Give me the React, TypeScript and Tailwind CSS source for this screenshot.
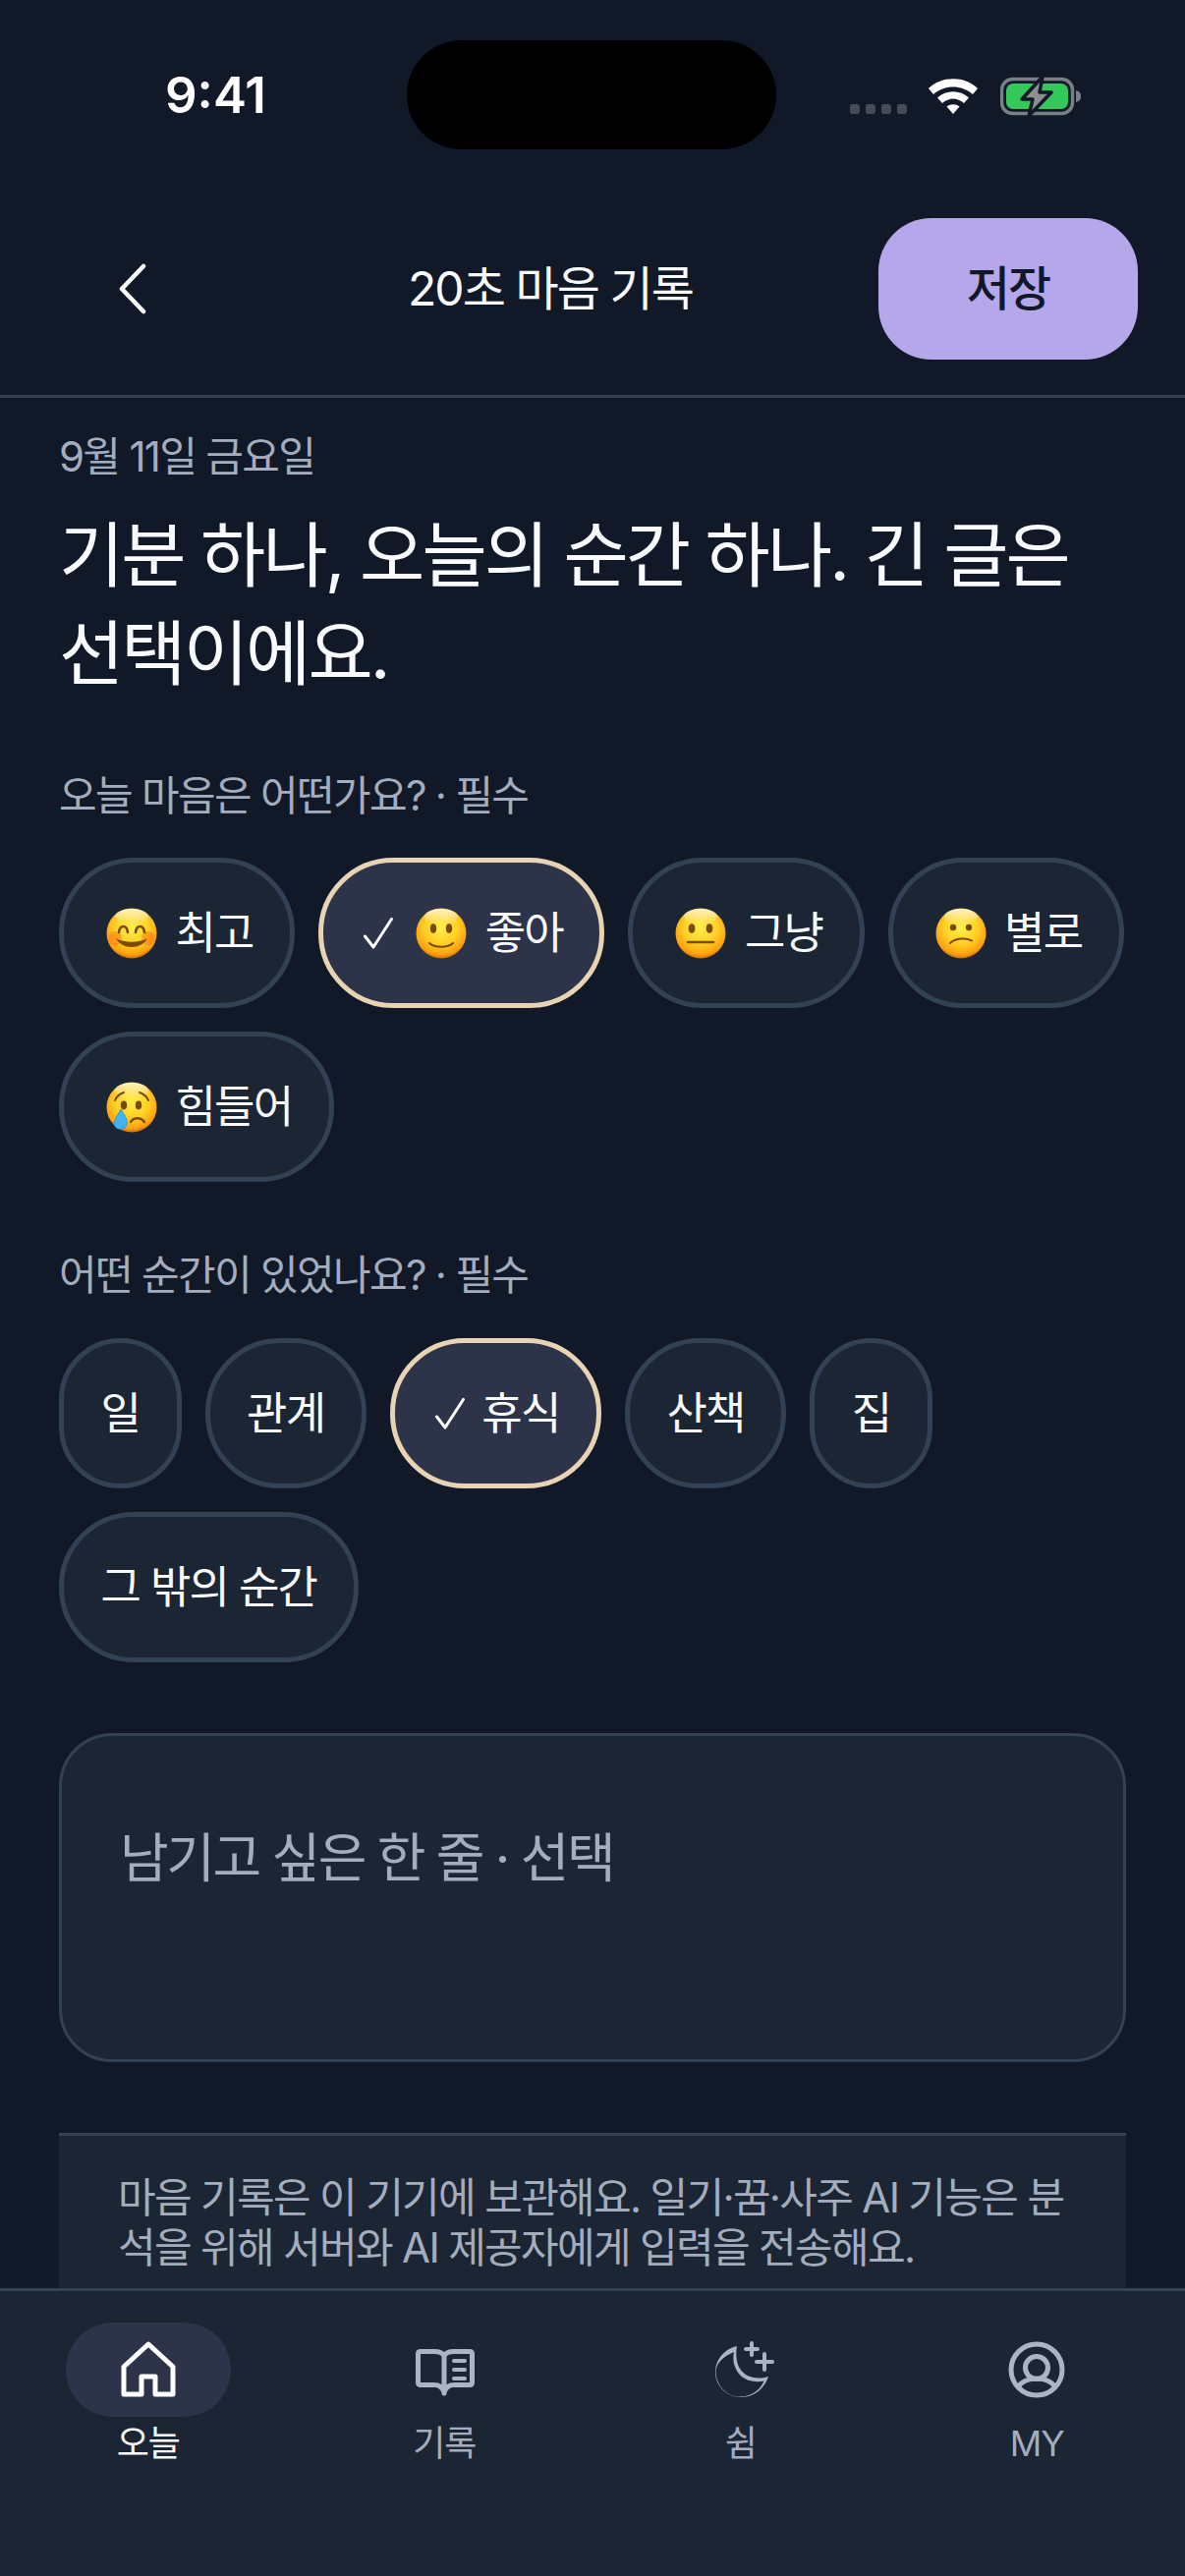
import type { ReactNode } from "react";

type Mood = "best" | "good" | "soso" | "bad" | "hard";

const moods: { id: Mood; label: string; selected?: boolean }[] = [
  { id: "best", label: "최고" },
  { id: "good", label: "좋아", selected: true },
  { id: "soso", label: "그냥" },
  { id: "bad", label: "별로" },
  { id: "hard", label: "힘들어" },
];

const moments: { label: string; selected?: boolean }[] = [
  { label: "일" },
  { label: "관계" },
  { label: "휴식", selected: true },
  { label: "산책" },
  { label: "집" },
  { label: "그 밖의 순간" },
];

function CheckMark() {
  return (
    <svg width="30" height="32" viewBox="0 0 30 32" fill="none" className="ml-[3.5px] mr-[17.5px] shrink-0">
      <path d="M1.5 19 L10 30 L28.5 1.5" stroke="#ffffff" strokeWidth="3" strokeLinecap="round" strokeLinejoin="round" />
    </svg>
  );
}

function EmojiFace({ mood }: { mood: Mood }) {
  const brown = "#7a4a0a";
  return (
    <svg width="52" height="52" viewBox="0 0 52 52" className="ml-[5.5px] mr-[18.5px] shrink-0">
      <defs>
        <radialGradient id={`face-${mood}`} cx="50%" cy="38%" r="62%">
          <stop offset="0%" stopColor="#fff04a" />
          <stop offset="55%" stopColor="#ffcf24" />
          <stop offset="88%" stopColor="#ff9f0f" />
          <stop offset="100%" stopColor="#c96f08" />
        </radialGradient>
        <linearGradient id={`shine-${mood}`} x1="0" y1="0" x2="0" y2="1">
          <stop offset="0%" stopColor="#ffffff" stopOpacity="0.75" />
          <stop offset="100%" stopColor="#ffffff" stopOpacity="0" />
        </linearGradient>
      </defs>
      <circle cx="26" cy="26" r="25.5" fill={`url(#face-${mood})`} />
      <ellipse cx="26" cy="9" rx="17" ry="8" fill={`url(#shine-${mood})`} />
      {mood === "best" && (
        <>
          <circle cx="9" cy="31" r="7" fill="#ff7a1a" opacity="0.55" />
          <circle cx="43" cy="31" r="7" fill="#ff7a1a" opacity="0.55" />
          <path d="M13 25 C14 17 21 17 22 25 M30 25 C31 17 38 17 39 25" stroke={brown} strokeWidth="2.6" fill="none" strokeLinecap="round" />
          <path d="M10 31 C16 43 36 43 42 31 C34 36 18 36 10 31 Z" fill={brown} />
        </>
      )}
      {mood === "good" && (
        <>
          <ellipse cx="18" cy="21" rx="3.2" ry="4.8" fill={brown} />
          <ellipse cx="34" cy="21" rx="3.2" ry="4.8" fill={brown} />
          <path d="M14 36 C19 41 33 41 38 36" stroke={brown} strokeWidth="2" fill="none" strokeLinecap="round" />
        </>
      )}
      {mood === "soso" && (
        <>
          <ellipse cx="17" cy="21" rx="3.4" ry="4.8" fill={brown} />
          <ellipse cx="35" cy="21" rx="3.4" ry="4.8" fill={brown} />
          <path d="M13 35 H39" stroke={brown} strokeWidth="2.6" strokeLinecap="round" />
        </>
      )}
      {mood === "bad" && (
        <>
          <circle cx="18" cy="20" r="3.2" fill={brown} />
          <circle cx="34" cy="20" r="3.2" fill={brown} />
          <path d="M15 36 C20 31 31 30 37 33.5" stroke={brown} strokeWidth="2" fill="none" strokeLinecap="round" />
        </>
      )}
      {mood === "hard" && (
        <>
          <path d="M9 19 C11 14 15 12 18 11 M43 19 C41 14 37 12 34 11" stroke={brown} strokeWidth="2" fill="none" strokeLinecap="round" />
          <ellipse cx="18" cy="24" rx="3.2" ry="4.4" fill={brown} />
          <ellipse cx="33" cy="24" rx="3.2" ry="4.4" fill={brown} />
          <path d="M25 41 C28 36 35 36 39 41" stroke={brown} strokeWidth="2.4" fill="none" strokeLinecap="round" />
          <path d="M15 28 C20 36 22 39 21 43 C20 50 9 50 8 43 C8 39 12 34 15 28 Z" fill="#3fb4f2" stroke="#1f8fd6" strokeWidth="0.8" />
        </>
      )}
    </svg>
  );
}

function Chip({ selected, children }: { selected?: boolean; children: ReactNode }) {
  return (
    <button
      className={
        selected
          ? "flex h-[153px] items-center rounded-[76px] border-[5px] border-[#e8d3b2] bg-[#2d3348] px-[37.5px] text-[45px] tracking-[-0.04em] text-[#f8fafc]"
          : "flex h-[153px] items-center rounded-[76px] border-[5px] border-[#334155] bg-[#1c2534] px-[37.5px] text-[45px] tracking-[-0.04em] text-[#f8fafc]"
      }
    >
      {children}
    </button>
  );
}

function StatusBar() {
  return (
    <div className="relative h-[222px] shrink-0">
      <span className="absolute left-[168px] top-[66px] text-[51px] font-semibold leading-[62px] text-white">9:41</span>
      <div className="absolute left-[414px] top-[41px] h-[111px] w-[376px] rounded-full bg-black" />
      <div className="absolute left-[865px] top-[106px] flex gap-[6px]">
        <span className="h-[10px] w-[10px] rounded-[3px] bg-[#474b57]" />
        <span className="h-[10px] w-[10px] rounded-[3px] bg-[#474b57]" />
        <span className="h-[10px] w-[10px] rounded-[3px] bg-[#474b57]" />
        <span className="h-[10px] w-[10px] rounded-[3px] bg-[#474b57]" />
      </div>
      <svg className="absolute left-[944px] top-[78px]" width="52" height="40" viewBox="0 0 52 40" fill="#ffffff">
        <path d="M1 12 C14 -1 38 -1 51 12 L46 18 C35 8 17 8 6 18 Z" />
        <path d="M10 21.5 C19 13 33 13 42 21.5 L37 27 C30 21 22 21 15 27 Z" />
        <path d="M19.5 30.5 C23.5 27.5 28.5 27.5 32.5 30.5 L26 38 Z" />
      </svg>
      <svg className="absolute left-[1018px] top-[76px]" width="84" height="44" viewBox="0 0 84 44">
        <rect x="1.5" y="4.5" width="72" height="35" rx="11" fill="none" stroke="#7b7e86" strokeWidth="3.5" />
        <rect x="6" y="9" width="63" height="26" rx="7" fill="#34c759" />
        <path d="M77 16 C81 17 82 19 82 22 C82 25 81 27 77 28 Z" fill="#7b7e86" />
        <path d="M43 2 L22 25 H33 L29 42 L52 18 H40 Z" fill="#8b8e96" stroke="#111827" strokeWidth="3.5" strokeLinejoin="round" />
      </svg>
    </div>
  );
}

function Header() {
  return (
    <header className="flex h-[183px] shrink-0 items-start border-b-[3px] border-[#334155] px-[48px]">
      <button className="flex h-[144px] w-[178px] items-center justify-center">
        <svg width="30" height="52" viewBox="0 0 30 52" fill="none" className="-ml-[4px]">
          <path d="M26 3 L4 26 L26 49" stroke="#ffffff" strokeWidth="4.5" strokeLinecap="round" strokeLinejoin="round" />
        </svg>
      </button>
      <h1 className="flex h-[144px] flex-1 items-center justify-center text-[48px] font-normal tracking-[-0.04em] text-[#f8fafc]">20초 마음 기록</h1>
      <button className="h-[144px] w-[264px] rounded-[54px] bg-[#b5a7ea] text-[48px] font-medium tracking-[-0.04em] text-[#111827]">저장</button>
    </header>
  );
}

function HomeIcon() {
  return (
    <svg width="72" height="72" viewBox="0 0 72 72" fill="none">
      <path d="M36 10 L61 33 V61 H43 V43 H29 V61 H11 V33 Z" stroke="#ffffff" strokeWidth="5" strokeLinejoin="round" />
    </svg>
  );
}

function BookIcon() {
  return (
    <svg width="72" height="72" viewBox="0 0 72 72" fill="none" stroke="#a9b4c4" strokeLinecap="round" strokeLinejoin="round">
      <path
        d="M36 22 C34 18 30 17.5 26 17.5 H12 Q9.5 17.5 9.5 20 V49 Q9.5 51.5 12 51.5 H26 C30 51.5 34 53 36 59 C38 53 42 51.5 46 51.5 H62 Q64.5 51.5 64.5 49 V20 Q64.5 17.5 62 17.5 H46 C42 17.5 38 18 36 22 Z M36 22 V60"
        strokeWidth="5"
      />
      <path d="M46 27 H57 M46 36 H57 M46 45 H57" strokeWidth="4" />
    </svg>
  );
}

function MoonIcon() {
  return (
    <svg width="72" height="72" viewBox="0 0 72 72" fill="none">
      <path
        fillRule="evenodd"
        fill="#a9b4c4"
        d="M32 12 C18 15 10 27 10 38 C10 53 22 64 36 64 C50 64 60 55 64 43 C50 47 38 43 33 31 C31 24 31 18 32 12 Z M29 18 C17 23 10.6 30 10.6 38 C10.6 52 22 63.4 34 63.4 C46 63.4 55 58 59.5 47.5 C47 50 35 46 30 33 C28 28 28 23 29 18 Z"
      />
      <path d="M60 20 V36 M52 28 H68 M47 9 V21 M41 15 H53" stroke="#a9b4c4" strokeWidth="4" strokeLinecap="round" />
    </svg>
  );
}

function ProfileIcon() {
  return (
    <svg width="72" height="72" viewBox="0 0 72 72" fill="none" stroke="#a9b4c4" strokeWidth="5">
      <circle cx="36" cy="36" r="26" />
      <circle cx="36" cy="34" r="11.5" />
      <path d="M17 54 C24 42 48 42 55 54" />
    </svg>
  );
}

function TabBar() {
  const tabs = [
    { label: "오늘", icon: <HomeIcon />, active: true },
    { label: "기록", icon: <BookIcon /> },
    { label: "쉼", icon: <MoonIcon /> },
    { label: "MY", icon: <ProfileIcon /> },
  ];

  return (
    <nav className="flex h-[293px] shrink-0 border-t-[3px] border-[#334155] bg-[#1c2534] pt-[32px]">
      {tabs.map((tab) => (
        <div key={tab.label} className="flex flex-1 flex-col items-center">
          <div className={tab.active ? "flex h-[96px] w-[168px] items-center justify-center rounded-full bg-[#2d3348]" : "flex h-[96px] w-[168px] items-center justify-center"}>
            {tab.icon}
          </div>
          <span className={tab.active ? "mt-[3px] text-[36px] leading-[48px] tracking-[-0.03em] text-[#f8fafc]" : "mt-[3px] text-[36px] leading-[48px] tracking-[-0.03em] text-[#a3adbd]"}>
            {tab.label}
          </span>
        </div>
      ))}
    </nav>
  );
}

export default function App() {
  return (
    <div className="flex h-[2622px] w-[1206px] flex-col overflow-hidden bg-[#111827] font-['Inter','Noto_Sans_CJK_KR',sans-serif]">
      <StatusBar />
      <Header />
      <main className="min-h-0 flex-1 overflow-hidden px-[60px] pt-[30px]">
        <p className="text-[42px] leading-[60px] tracking-[-0.04em] text-[#a3adbd]">9월 11일 금요일</p>
        <h2 className="mt-[20px] text-[72px] font-normal leading-[100px] tracking-[-0.04em] text-[#f8fafc]">기분 하나, 오늘의 순간 하나. 긴 글은 선택이에요.</h2>

        <p className="mt-[65px] text-[42px] leading-[60px] tracking-[-0.04em] text-[#a3adbd]">오늘 마음은 어떤가요? · 필수</p>
        <div className="mt-[33px] flex flex-wrap gap-[24px]">
          {moods.map((mood) => (
            <Chip key={mood.id} selected={mood.selected}>
              {mood.selected && <CheckMark />}
              <EmojiFace mood={mood.id} />
              <span>{mood.label}</span>
            </Chip>
          ))}
        </div>

        <p className="mt-[65px] text-[42px] leading-[60px] tracking-[-0.04em] text-[#a3adbd]">어떤 순간이 있었나요? · 필수</p>
        <div className="mt-[34px] flex flex-wrap gap-[24px]">
          {moments.map((moment) => (
            <Chip key={moment.label} selected={moment.selected}>
              {moment.selected && <CheckMark />}
              <span>{moment.label}</span>
            </Chip>
          ))}
        </div>

        <div className="mt-[72px] h-[335px] rounded-[54px] border-[3px] border-[#334155] bg-[#1c2534] px-[59px] pt-[90px] text-[54px] leading-[70px] tracking-[-0.045em] text-[#a3adbd]">
          남기고 싶은 한 줄 · 선택
        </div>

        <div className="mt-[72px] border-t-[3px] border-[#334155] bg-[#1c2534] px-[60px] pb-[40px] pt-[37px] text-[42px] leading-[51px] tracking-[-0.04em] text-[#a3adbd]">
          마음 기록은 이 기기에 보관해요. 일기·꿈·사주 AI 기능은 분석을 위해 서버와 AI 제공자에게 입력을 전송해요.
        </div>
      </main>
      <TabBar />
    </div>
  );
}
